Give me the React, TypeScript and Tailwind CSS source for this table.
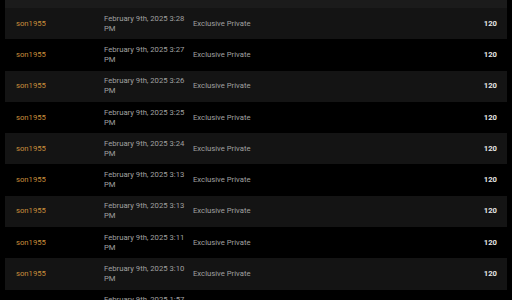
import React from "react";

const rows = [
  "3:28",
  "3:27",
  "3:26",
  "3:25",
  "3:24",
  "3:13",
  "3:13",
  "3:11",
  "3:10",
  "1:57",
];

export default function App() {
  return (
    <div
      className="w-[512px] h-[300px] overflow-hidden bg-black px-[5px]"
      style={{ fontFamily: "Roboto, 'Liberation Sans', sans-serif" }}
    >
      <div className="h-[8px] bg-[#1b1b1b]" />
      {rows.map((t, i) => (
        <div
          key={i}
          className={`flex items-center h-[31.3px] pl-[11px] pr-[10px] text-[7.7px] leading-[10px] ${
            i % 2 === 0 ? "bg-[#141414]" : "bg-black"
          }`}
        >
          <div className="w-[88px] shrink-0 text-[#c98f3c]">son1955</div>
          <div className="w-[89px] shrink-0 pr-[5px] text-[#a0a0a0]">
            February 9th, 2025 {t} PM
          </div>
          <div className="flex-1 text-[#a0a0a0]">Exclusive Private</div>
          <div className="font-bold text-[#e6e6e6]">120</div>
        </div>
      ))}
    </div>
  );
}
